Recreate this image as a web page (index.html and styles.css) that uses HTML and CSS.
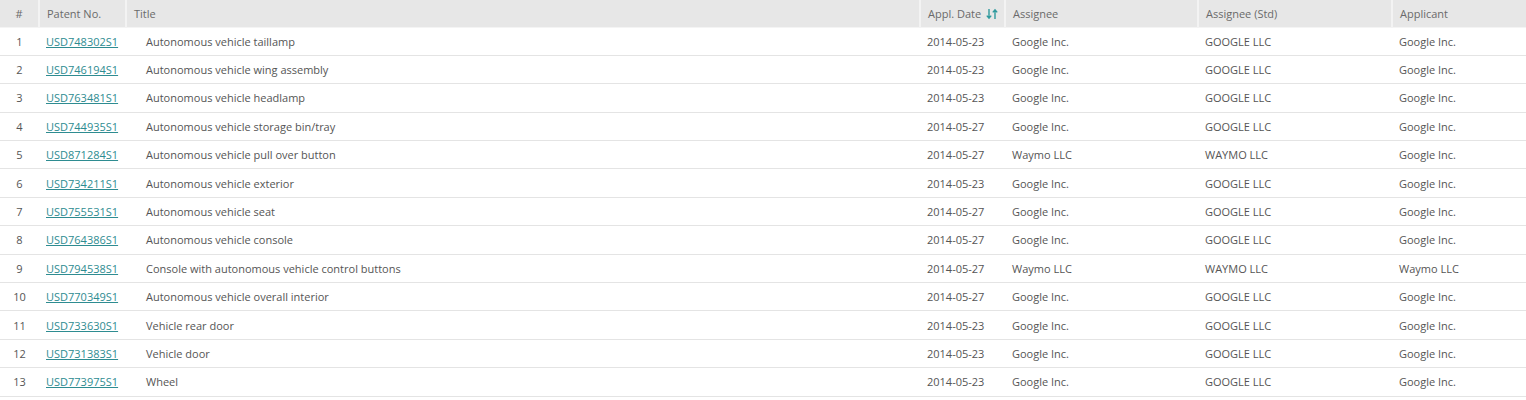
FILE: index.html
```html
<!DOCTYPE html>
<html>
<head>
<meta charset="utf-8">
<link rel="stylesheet" href="styles.css">
</head>
<body>
<table class="grid">
  <colgroup>
    <col class="c-num"><col class="c-pat"><col class="c-title"><col class="c-date"><col class="c-asg"><col class="c-std"><col class="c-app">
  </colgroup>
  <thead>
    <tr>
      <th class="num">#</th>
      <th>Patent No.</th>
      <th>Title</th>
      <th>Appl. Date <svg class="sort" width="12" height="12" viewBox="0 0 12 12"><path d="M3 1v9M0.8 7.6L3 10.2 5.2 7.6M9 11V2M6.8 4.4L9 1.8 11.2 4.4" fill="none" stroke="#2f9a9e" stroke-width="1.4"/></svg></th>
      <th>Assignee</th>
      <th>Assignee (Std)</th>
      <th>Applicant</th>
    </tr>
  </thead>
  <tbody>
    <tr><td class="num">1</td><td><a href="#">USD748302S1</a></td><td class="title">Autonomous vehicle taillamp</td><td>2014-05-23</td><td>Google Inc.</td><td>GOOGLE LLC</td><td>Google Inc.</td></tr>
    <tr><td class="num">2</td><td><a href="#">USD746194S1</a></td><td class="title">Autonomous vehicle wing assembly</td><td>2014-05-23</td><td>Google Inc.</td><td>GOOGLE LLC</td><td>Google Inc.</td></tr>
    <tr><td class="num">3</td><td><a href="#">USD763481S1</a></td><td class="title">Autonomous vehicle headlamp</td><td>2014-05-23</td><td>Google Inc.</td><td>GOOGLE LLC</td><td>Google Inc.</td></tr>
    <tr><td class="num">4</td><td><a href="#">USD744935S1</a></td><td class="title">Autonomous vehicle storage bin/tray</td><td>2014-05-27</td><td>Google Inc.</td><td>GOOGLE LLC</td><td>Google Inc.</td></tr>
    <tr><td class="num">5</td><td><a href="#">USD871284S1</a></td><td class="title">Autonomous vehicle pull over button</td><td>2014-05-27</td><td>Waymo LLC</td><td>WAYMO LLC</td><td>Google Inc.</td></tr>
    <tr><td class="num">6</td><td><a href="#">USD734211S1</a></td><td class="title">Autonomous vehicle exterior</td><td>2014-05-23</td><td>Google Inc.</td><td>GOOGLE LLC</td><td>Google Inc.</td></tr>
    <tr><td class="num">7</td><td><a href="#">USD755531S1</a></td><td class="title">Autonomous vehicle seat</td><td>2014-05-27</td><td>Google Inc.</td><td>GOOGLE LLC</td><td>Google Inc.</td></tr>
    <tr><td class="num">8</td><td><a href="#">USD764386S1</a></td><td class="title">Autonomous vehicle console</td><td>2014-05-27</td><td>Google Inc.</td><td>GOOGLE LLC</td><td>Google Inc.</td></tr>
    <tr><td class="num">9</td><td><a href="#">USD794538S1</a></td><td class="title">Console with autonomous vehicle control buttons</td><td>2014-05-27</td><td>Waymo LLC</td><td>WAYMO LLC</td><td>Waymo LLC</td></tr>
    <tr><td class="num">10</td><td><a href="#">USD770349S1</a></td><td class="title">Autonomous vehicle overall interior</td><td>2014-05-27</td><td>Google Inc.</td><td>GOOGLE LLC</td><td>Google Inc.</td></tr>
    <tr><td class="num">11</td><td><a href="#">USD733630S1</a></td><td class="title">Vehicle rear door</td><td>2014-05-23</td><td>Google Inc.</td><td>GOOGLE LLC</td><td>Google Inc.</td></tr>
    <tr><td class="num">12</td><td><a href="#">USD731383S1</a></td><td class="title">Vehicle door</td><td>2014-05-23</td><td>Google Inc.</td><td>GOOGLE LLC</td><td>Google Inc.</td></tr>
    <tr><td class="num">13</td><td><a href="#">USD773975S1</a></td><td class="title">Wheel</td><td>2014-05-23</td><td>Google Inc.</td><td>GOOGLE LLC</td><td>Google Inc.</td></tr>
  </tbody>
</table>
</body>
</html>
```
FILE: styles.css
```css
html, body {
  margin: 0;
  padding: 0;
  background: #ffffff;
}
body {
  font-family: "Open Sans", "Noto Sans", sans-serif;
  font-size: 11px;
  color: #555555;
}
.grid {
  width: 1526px;
  border-collapse: collapse;
  table-layout: fixed;
}
.c-num { width: 39px; }
.c-pat { width: 87px; }
.c-title { width: 794px; }
.c-date { width: 85px; }
.c-asg { width: 193px; }
.c-std { width: 194px; }
.c-app { width: 134px; }
.grid th {
  height: 27px;
  padding: 0 7px;
  background: #e7e7e7;
  color: #6a6a6a;
  font-weight: normal;
  text-align: left;
  border-left: 2px solid #f3f3f3;
  box-sizing: border-box;
  white-space: nowrap;
}
.grid th:first-child { border-left: none; }
.grid th.num, .grid td.num { text-align: center; padding: 0; }
.grid td {
  height: 28.4px;
  padding: 0 7px;
  border-bottom: 1px solid #e4e4e4;
  box-sizing: border-box;
  white-space: nowrap;
}
.grid td.title { padding-left: 20px; }
.grid tbody tr:first-child td { border-top: 1px solid #f4f4f4; }
.grid a {
  color: #2e8c91;
  text-decoration: underline;
}
.sort {
  vertical-align: -2px;
  margin-left: 2px;
}
```
